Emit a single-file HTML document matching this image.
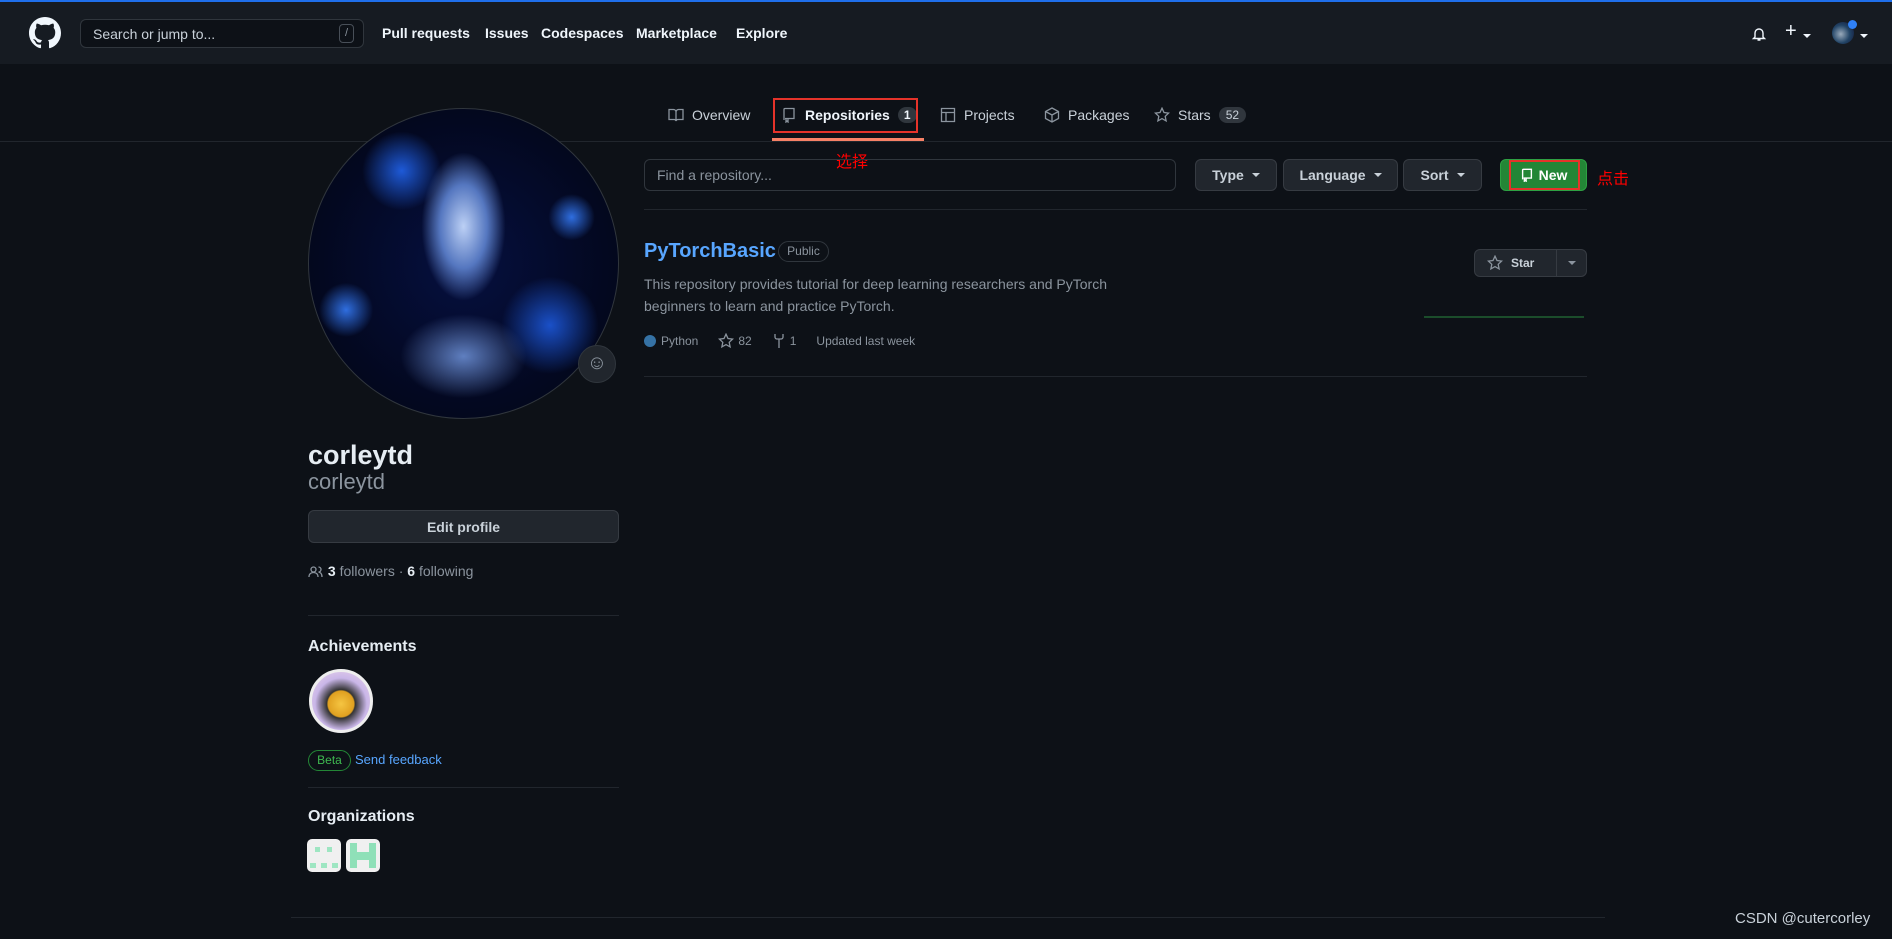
<!DOCTYPE html>
<html><head><meta charset="utf-8"><style>
*{box-sizing:border-box;margin:0;padding:0}
body{width:1892px;height:939px;background:#0d1117;font-family:"Liberation Sans","Noto Sans CJK SC",sans-serif;color:#c9d1d9;position:relative;overflow:hidden}
.a{position:absolute}
.hdr{left:0;top:0;width:1892px;height:64px;background:#161b22;border-top:2px solid #1f6feb}
.nav{color:#f0f6fc;font-weight:bold;font-size:14px;top:25px}
.btn{background:#21262d;border:1px solid #363b42;border-radius:6px;color:#c9d1d9;font-weight:bold;font-size:14px;display:flex;align-items:center;justify-content:center}
.caret{display:inline-block;border-left:4px solid transparent;border-right:4px solid transparent;border-top:4px solid #c9d1d9;margin-left:8px}
.tab{top:107px;font-size:14px;color:#c9d1d9;display:flex;align-items:center;gap:8px}
.line{height:1px;background:#21262d}
.muted{color:#8b949e}
</style></head><body>
<div class="a hdr"></div>
<svg class="a" style="left:29px;top:17px" width="32" height="32" viewBox="0 0 16 16"><path fill="#f0f6fc" d="M8 0C3.580 0 0 3.58 0 8c0 3.54 2.29 6.53 5.47 7.59.4.07.55-.17.55-.38 0-.19-.01-.82-.01-1.49-2.01.37-2.53-.49-2.690-.94-.09-.23-.48-.94-.82-1.13-.28-.15-.68-.52-.01-.53.63-.01 1.08.58 1.23.82.72 1.21 1.87.87 2.33.66.07-.52.28-.87.51-1.07-1.78-.2-3.64-.89-3.64-3.95 0-.87.31-1.59.82-2.15-.08-.2-.36-1.02.08-2.12 0 0 .67-.21 2.2.82.64-.18 1.32-.27 2-.27.68 0 1.36.09 2 .27 1.53-1.04 2.2-.82 2.2-.82.44 1.1.16 1.92.08 2.12.51.56.82 1.27.82 2.15 0 3.07-1.87 3.75-3.65 3.95.29.25.54.73.54 1.48 0 1.07-.01 1.93-.01 2.2 0 .21.15.46.55.38A8.013 8.013 0 0016 8c0-4.42-3.58-8-8-8z"/></svg>
<div class="a" style="left:80px;top:19px;width:284px;height:29px;border:1px solid #30363d;border-radius:6px;background:#0d1117"></div>
<div class="a" style="left:93px;top:26px;font-size:14px;color:#c9d1d9">Search or jump to...</div>
<div class="a" style="left:339px;top:24px;width:15px;height:19px;border:1px solid #484f58;border-radius:4px;color:#8b949e;font-size:11px;text-align:center;line-height:17px">/</div>
<div class="a nav" style="left:382px">Pull requests</div>
<div class="a nav" style="left:485px">Issues</div>
<div class="a nav" style="left:541px">Codespaces</div>
<div class="a nav" style="left:636px">Marketplace</div>
<div class="a nav" style="left:736px">Explore</div>
<svg class="a" style="left:1751px;top:26px" width="16" height="16" viewBox="0 0 16 16"><path fill="none" stroke="#f0f6fc" stroke-width="1.4" d="M4 11V7a4 4 0 018 0v4l1.5 1.5h-11zM6.5 14h3"/></svg>
<div class="a" style="left:1785px;top:20px;color:#f0f6fc;font-size:20px">+</div><div class="a caret" style="left:1795px;top:34px;border-top-color:#f0f6fc"></div>
<div class="a" style="left:1832px;top:22px;width:22px;height:22px;border-radius:50%;background:radial-gradient(circle at 40% 55%,#9ab 0,#246 50%,#113 100%)"></div>
<div class="a" style="left:1848px;top:20px;width:9px;height:9px;border-radius:50%;background:#2f81f7"></div>
<div class="a caret" style="left:1852px;top:34px;border-top-color:#f0f6fc"></div>

<div class="a line" style="left:0;top:141px;width:1892px"></div>
<div class="a tab" style="left:668px"><svg width="16" height="16" viewBox="0 0 16 16"><path fill="none" stroke="#8b949e" stroke-width="1.3" d="M1 2.5h4.5A2.5 2.5 0 018 5v9a2 2 0 00-2-1.5H1zM15 2.5h-4.5A2.5 2.5 0 008 5v9a2 2 0 012-1.5h5z"/></svg>Overview</div>
<div class="a tab" style="left:781px;color:#f0f6fc;font-weight:bold"><svg width="16" height="16" viewBox="0 0 16 16"><path fill="none" stroke="#8b949e" stroke-width="1.3" d="M3 13V2.5A1 1 0 014 1.5h9v10H4M5 12v3l1-1 1 1v-3"/></svg>Repositories<span style="background:#30363d;border-radius:10px;padding:1px 6px;font-size:12px">1</span></div>
<div class="a" style="left:773px;top:98px;width:145px;height:35px;border:2px solid #e5332a"></div>
<div class="a" style="left:772px;top:138px;width:152px;height:3px;background:#f78166"></div>
<div class="a tab" style="left:940px"><svg width="16" height="16" viewBox="0 0 16 16"><path fill="none" stroke="#8b949e" stroke-width="1.3" d="M1.5 1.5h13v13h-13zM1.5 5.5h13M6 5.5v9"/></svg>Projects</div>
<div class="a tab" style="left:1044px"><svg width="16" height="16" viewBox="0 0 16 16"><path fill="none" stroke="#8b949e" stroke-width="1.3" d="M8 1l6.5 3.5v7L8 15l-6.5-3.5v-7zM1.5 4.5L8 8l6.5-3.5M8 8v7"/></svg>Packages</div>
<div class="a tab" style="left:1154px"><svg width="16" height="16" viewBox="0 0 16 16"><path fill="none" stroke="#8b949e" stroke-width="1.3" d="M8 1.2l2 4.3 4.6.6-3.4 3.2.9 4.6L8 11.6l-4.1 2.3.9-4.6L1.4 6.1 6 5.5z"/></svg>Stars<span style="background:#30363d;border-radius:10px;padding:1px 7px;font-size:12px">52</span></div>
<div class="a" style="left:836px;top:148px;color:#f00;font-size:16px">选择</div>

<div class="a" style="left:308px;top:108px;width:311px;height:311px;border-radius:50%;border:1px solid #30363d;background:radial-gradient(ellipse 17% 30% at 50% 38%,#bcd0f5 0,#5577c0 45%,transparent 80%),radial-gradient(ellipse 24% 16% at 50% 80%,#5f7fc0 0,transparent 85%),radial-gradient(circle at 12% 65%,#2f6ee0 0,transparent 8%),radial-gradient(circle at 85% 35%,#2f6ee0 0,transparent 7%),radial-gradient(circle at 30% 20%,#1e5ad8 0,transparent 12%),radial-gradient(circle at 78% 70%,#1a50c8 0,transparent 15%),radial-gradient(circle,#061040 0,#030820 65%,#020512 100%)"></div>
<div class="a" style="left:578px;top:345px;width:38px;height:38px;border-radius:50%;background:#21262d;border:1px solid #30363d;color:#8b949e;font-size:20px;text-align:center;line-height:35px">☺</div>
<div class="a" style="left:308px;top:440px;font-size:27px;font-weight:bold;color:#e6edf3">corleytd</div>
<div class="a" style="left:308px;top:469px;font-size:22px;color:#8b949e">corleytd</div>
<div class="a btn" style="left:308px;top:510px;width:311px;height:33px">Edit profile</div>
<div class="a muted" style="left:308px;top:563px;font-size:14px"><svg width="16" height="14" viewBox="0 0 16 14" style="vertical-align:-2px"><path fill="none" stroke="#8b949e" stroke-width="1.3" d="M1 13c0-3 2-4.5 4.5-4.5S10 10 10 13M5.5 8a2.5 2.5 0 100-5 2.5 2.5 0 000 5zM10.5 3a2.5 2.5 0 010 5c2 .3 3.5 2 3.5 5"/></svg> <b style="color:#e6edf3">3</b> followers · <b style="color:#e6edf3">6</b> following</div>
<div class="a line" style="left:308px;top:615px;width:311px"></div>
<div class="a" style="left:308px;top:638px;font-size:16px;font-weight:bold;color:#e6edf3">Achievements</div>
<div class="a" style="left:309px;top:669px;width:64px;height:64px;border-radius:50%;border:3px solid #eee;background:radial-gradient(circle at 50% 55%,#f5c542 0,#e0a020 30%,#333 33%,#c9b6e8 60%,#f0d8e8 100%)"></div>
<div class="a" style="left:308px;top:750px;width:43px;height:21px;border:1px solid #238636;border-radius:11px;color:#3fb950;font-size:12px;text-align:center;line-height:19px">Beta</div>
<div class="a" style="left:355px;top:752px;font-size:13px;color:#58a6ff">Send feedback</div>
<div class="a line" style="left:308px;top:787px;width:311px"></div>
<div class="a" style="left:308px;top:808px;font-size:16px;font-weight:bold;color:#e6edf3">Organizations</div>
<div class="a" style="left:307px;top:839px;width:34px;height:33px;border-radius:5px;background:#f0f0f0"><div class="a" style="left:8px;top:8px;width:5px;height:5px;background:#9ee6c2"></div><div class="a" style="left:20px;top:8px;width:5px;height:5px;background:#9ee6c2"></div><div class="a" style="left:3px;top:24px;width:28px;height:5px;background:repeating-linear-gradient(90deg,#9ee6c2 0 6px,transparent 6px 11px)"></div></div>
<div class="a" style="left:346px;top:839px;width:34px;height:33px;border-radius:5px;background:#f0f0f0"><div class="a" style="left:4px;top:4px;width:26px;height:25px;background:linear-gradient(90deg,#8fe0b8 0 7px,transparent 7px 19px,#8fe0b8 19px),linear-gradient(#8fe0b8,#8fe0b8) center/26px 8px no-repeat"></div></div>

<div class="a" style="left:644px;top:159px;width:532px;height:32px;border:1px solid #30363d;border-radius:6px"></div>
<div class="a muted" style="left:657px;top:167px;font-size:14px">Find a repository...</div>
<div class="a btn" style="left:1195px;top:159px;width:82px;height:32px">Type<span class="caret"></span></div>
<div class="a btn" style="left:1283px;top:159px;width:115px;height:32px">Language<span class="caret"></span></div>
<div class="a btn" style="left:1403px;top:159px;width:79px;height:32px">Sort<span class="caret"></span></div>
<div class="a btn" style="left:1500px;top:159px;width:87px;height:32px;background:#238636;border-color:#2ea043;color:#fff"><svg width="14" height="14" viewBox="0 0 16 16" style="margin-right:5px"><path fill="none" stroke="#fff" stroke-width="1.6" d="M3 13V2.5A1 1 0 014 1.5h9v10H4M5 12v3l1-1 1 1v-3"/></svg>New</div>
<div class="a" style="left:1509px;top:160px;width:71px;height:30px;border:2px solid #e5332a"></div>
<div class="a" style="left:1597px;top:165px;color:#f00;font-size:16px">点击</div>
<div class="a line" style="left:644px;top:209px;width:943px"></div>
<div class="a" style="left:644px;top:240px;font-size:20px;font-weight:bold;color:#58a6ff">PyTorchBasic</div>
<div class="a" style="left:778px;top:241px;width:51px;height:21px;border:1px solid #30363d;border-radius:11px;font-size:12px;color:#8b949e;text-align:center;line-height:19px">Public</div>
<div class="a muted" style="left:644px;top:273px;font-size:14px;line-height:22px">This repository provides tutorial for deep learning researchers and PyTorch<br>beginners to learn and practice PyTorch.</div>
<div class="a muted" style="left:644px;top:333px;font-size:12px;display:flex;align-items:center"><span style="width:12px;height:12px;border-radius:50%;background:#3572a5;margin-right:5px"></span>Python<svg width="16" height="16" viewBox="0 0 16 16" style="margin:0 4px 0 20px"><path fill="none" stroke="#8b949e" stroke-width="1.3" d="M8 1.2l2 4.3 4.6.6-3.4 3.2.9 4.6L8 11.6l-4.1 2.3.9-4.6L1.4 6.1 6 5.5z"/></svg>82<svg width="14" height="16" viewBox="0 0 14 16" style="margin:0 4px 0 20px"><path fill="none" stroke="#8b949e" stroke-width="1.3" d="M3 1v3a2 2 0 002 2h4a2 2 0 002-2V1M7 6v9"/></svg>1<span style="margin-left:20px">Updated last week</span></div>
<div class="a btn" style="left:1474px;top:249px;width:113px;height:28px;justify-content:flex-start;font-size:12px"><svg width="16" height="16" viewBox="0 0 16 16" style="margin:0 8px 0 12px"><path fill="none" stroke="#8b949e" stroke-width="1.3" d="M8 1.2l2 4.3 4.6.6-3.4 3.2.9 4.6L8 11.6l-4.1 2.3.9-4.6L1.4 6.1 6 5.5z"/></svg>Star<span style="position:absolute;left:81px;top:0;width:1px;height:26px;background:#363b42"></span><span class="caret" style="position:absolute;left:93px;top:11px;margin:0;border-top-color:#8b949e"></span></div>
<div class="a" style="left:1424px;top:316px;width:160px;height:2px;background:#1b4d2b"></div>
<div class="a line" style="left:644px;top:376px;width:943px"></div>
<div class="a line" style="left:291px;top:917px;width:1314px"></div>
<div class="a" style="left:1735px;top:910px;font-size:15px;color:#c9d1d9">CSDN @cutercorley</div>
</body></html>
